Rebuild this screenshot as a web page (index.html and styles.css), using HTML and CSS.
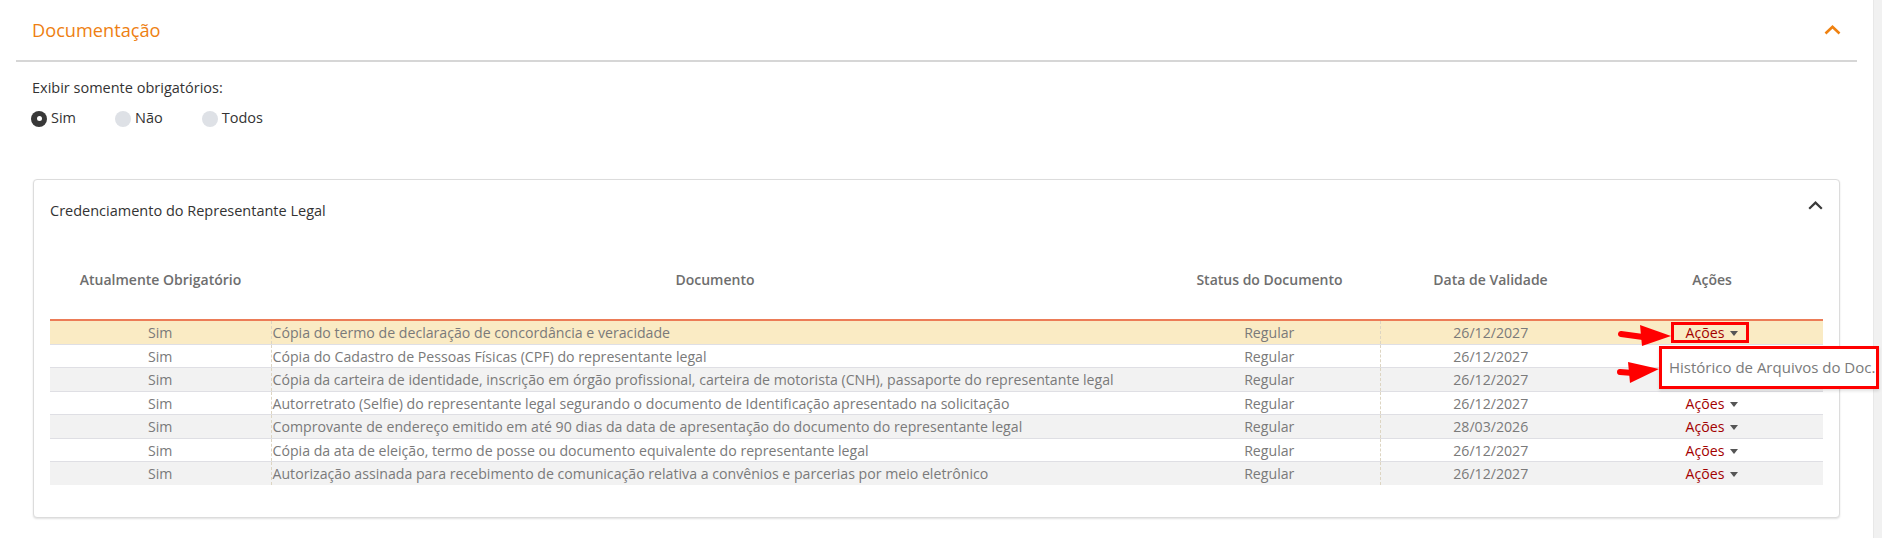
FILE: index.html
```html
<!DOCTYPE html>
<html lang="pt-BR">
<head>
<meta charset="utf-8">
<title>Documentação</title>
<link rel="stylesheet" href="styles.css">
</head>
<body>
<div class="page">
  <div class="main">
    <section class="doc">
      <div class="doc-head">
        <h2 class="doc-title">Documentação</h2>
        <svg class="chev-orange" width="17" height="10" viewBox="0 0 17 10"><polyline points="1.5,8.5 8.5,1.8 15.5,8.5" fill="none" stroke="#ef8110" stroke-width="2.6"/></svg>
      </div>
      <div class="filter">
        <div class="filter-label">Exibir somente obrigatórios:</div>
        <div class="radios">
          <label class="radio"><span class="dot on"></span>Sim</label>
          <label class="radio"><span class="dot"></span>Não</label>
          <label class="radio"><span class="dot"></span>Todos</label>
        </div>
      </div>
      <div class="card">
        <div class="card-head">
          <span class="card-title">Credenciamento do Representante Legal</span>
          <svg class="chev-dark" width="15" height="9" viewBox="0 0 15 9"><polyline points="1.2,7.8 7.5,1.6 13.8,7.8" fill="none" stroke="#3a3a3a" stroke-width="2.2"/></svg>
        </div>
        <table class="grid">
          <colgroup>
            <col class="c1"><col class="c2"><col class="c3"><col class="c4"><col class="c5">
          </colgroup>
          <thead>
            <tr>
              <th>Atualmente Obrigatório</th>
              <th>Documento</th>
              <th>Status do Documento</th>
              <th>Data de Validade</th>
              <th>Ações</th>
            </tr>
          </thead>
          <tbody>
            <tr class="sel">
              <td class="ctr">Sim</td>
              <td class="doc-cell">Cópia do termo de declaração de concordância e veracidade</td>
              <td class="ctr">Regular</td>
              <td class="ctr dash">26/12/2027</td>
              <td class="ctr"><span class="act">Ações</span><span class="caret"></span></td>
            </tr>
            <tr>
              <td class="ctr">Sim</td>
              <td class="doc-cell">Cópia do Cadastro de Pessoas Físicas (CPF) do representante legal</td>
              <td class="ctr">Regular</td>
              <td class="ctr dash">26/12/2027</td>
              <td class="ctr"></td>
            </tr>
            <tr class="alt">
              <td class="ctr">Sim</td>
              <td class="doc-cell">Cópia da carteira de identidade, inscrição em órgão profissional, carteira de motorista (CNH), passaporte do representante legal</td>
              <td class="ctr">Regular</td>
              <td class="ctr dash">26/12/2027</td>
              <td class="ctr"></td>
            </tr>
            <tr>
              <td class="ctr">Sim</td>
              <td class="doc-cell">Autorretrato (Selfie) do representante legal segurando o documento de Identificação apresentado na solicitação</td>
              <td class="ctr">Regular</td>
              <td class="ctr dash">26/12/2027</td>
              <td class="ctr"><span class="act">Ações</span><span class="caret"></span></td>
            </tr>
            <tr class="alt">
              <td class="ctr">Sim</td>
              <td class="doc-cell">Comprovante de endereço emitido em até 90 dias da data de apresentação do documento do representante legal</td>
              <td class="ctr">Regular</td>
              <td class="ctr dash">28/03/2026</td>
              <td class="ctr"><span class="act">Ações</span><span class="caret"></span></td>
            </tr>
            <tr>
              <td class="ctr">Sim</td>
              <td class="doc-cell">Cópia da ata de eleição, termo de posse ou documento equivalente do representante legal</td>
              <td class="ctr">Regular</td>
              <td class="ctr dash">26/12/2027</td>
              <td class="ctr"><span class="act">Ações</span><span class="caret"></span></td>
            </tr>
            <tr class="alt">
              <td class="ctr">Sim</td>
              <td class="doc-cell">Autorização assinada para recebimento de comunicação relativa a convênios e parcerias por meio eletrônico</td>
              <td class="ctr">Regular</td>
              <td class="ctr dash">26/12/2027</td>
              <td class="ctr"><span class="act">Ações</span><span class="caret"></span></td>
            </tr>
          </tbody>
        </table>
      </div>
    </section>
  </div>
  <div class="track"></div>

  <div class="mark-box"></div>
  <div class="dropdown">Histórico de Arquivos do Doc.</div>
  <svg class="arrows" width="80" height="90" viewBox="1600 310 80 90">
    <line x1="1621" y1="334" x2="1643" y2="337" stroke="#f00" stroke-width="6" stroke-linecap="round"/>
    <polygon points="1640,325 1671,336 1642,346" fill="#f00"/>
    <line x1="1620" y1="372" x2="1633" y2="373" stroke="#f00" stroke-width="6" stroke-linecap="round"/>
    <polygon points="1628,362 1659,369 1630,383" fill="#f00"/>
  </svg>
</div>
</body>
</html>
```

FILE: styles.css
```css
* { box-sizing: border-box; }
html, body { margin: 0; padding: 0; }
body {
  font-family: "Open Sans", "Noto Sans", sans-serif;
  font-size: 14px;
  color: #333;
  background: #fff;
  width: 1882px;
  height: 538px;
  overflow: hidden;
}
.page {
  position: relative;
  display: flex;
  height: 538px;
}
.main {
  width: 1873px;
  padding: 0 16px;
}
.track {
  width: 9px;
  background: #f1f1f1;
  border-left: 1px solid #e8e8e8;
}

/* section header */
.doc-head {
  display: flex;
  align-items: center;
  justify-content: space-between;
  height: 62px;
  padding: 0 16px;
  border-bottom: 2px solid #d6d6d6;
}
.doc-title {
  margin: 0;
  font-size: 18.2px;
  font-weight: 500;
  color: #ee7f12;
  line-height: 24px;
}
.chev-orange { display: block; margin-top: -1px; }

/* filter */
.filter { padding-left: 15px; font-size: 14.5px; }
.filter-label {
  margin-top: 16px;
  padding-left: 1px;
  line-height: 20px;
  color: #333;
}
.radios {
  display: flex;
  gap: 39px;
  margin-top: 10px;
  height: 20px;
}
.radio {
  display: flex;
  align-items: center;
  gap: 4px;
  line-height: 20px;
  color: #333;
}
.dot {
  width: 16px;
  height: 16px;
  border-radius: 50%;
  background: #dee1e6;
  position: relative;
  margin-top: 1px;
}
.dot.on { background: #383838; }
.dot.on::after {
  content: "";
  position: absolute;
  left: 5.5px;
  top: 5.5px;
  width: 5px;
  height: 5px;
  border-radius: 50%;
  background: #fff;
}

/* card */
.card {
  margin: 51px 17px 0 17px;
  border: 1px solid #dcdcdc;
  border-radius: 4px;
  box-shadow: 0 1px 2px rgba(0,0,0,0.12);
  padding: 0 16px 32px 16px;
  background: #fff;
}
.card-head {
  display: flex;
  justify-content: space-between;
  align-items: flex-start;
  padding-top: 21px;
  height: 42px;
}
.card-title {
  font-size: 14.5px;
  line-height: 20px;
  color: #333;
}
.chev-dark { display: block; margin-top: 0; }

/* table */
.grid {
  width: 100%;
  table-layout: fixed;
  border-collapse: collapse;
}
.c1 { width: 221px; }
.c2 { width: 888px; }
.c3 { width: 221px; }
.c4 { width: 221px; }
.c5 { width: 222px; }
.grid th {
  padding: 48px 0 29px;
  line-height: 20px;
  font-weight: 600;
  color: #6e6e6e;
  text-align: center;
  border-bottom: 2px solid #ec7c57;
  white-space: nowrap;
}
.grid td {
  padding: 1px 0 0;
  font-size: 14.15px;
  line-height: 21.5px;
  color: #7a7a7a;
  white-space: nowrap;
}
.grid tbody tr + tr td { border-top: 1px solid #dfdfe4; }
.grid tr.sel td { background: #faebc4; }
.grid tr.alt td { background: #f2f2f2; }
.ctr { text-align: center; }
.doc-cell {
  text-align: left;
  padding-left: 1px !important;
  border-left: 1px dashed #ddd5c2;
}
.dash { border-left: 1px dashed #ddd5c2; }
.act { color: #a30000; }
.caret {
  display: inline-block;
  width: 0;
  height: 0;
  margin-left: 6px;
  border-left: 4px solid transparent;
  border-right: 4px solid transparent;
  border-top: 5px solid #555;
  vertical-align: 2px;
}

/* annotation overlays */
.mark-box {
  position: absolute;
  left: 1671px;
  top: 322px;
  width: 78px;
  height: 21px;
  border: 3px solid #f00;
}
.dropdown {
  position: absolute;
  left: 1659px;
  top: 346px;
  width: 220px;
  height: 43px;
  border: 3px solid #f00;
  background: #fff;
  padding-left: 7px;
  font-size: 15px;
  line-height: 37px;
  color: #7a7a7a;
  white-space: nowrap;
  overflow: hidden;
  box-shadow: 0 2px 3px rgba(0,0,0,0.12);
}
.arrows {
  position: absolute;
  left: 1600px;
  top: 310px;
}
```
